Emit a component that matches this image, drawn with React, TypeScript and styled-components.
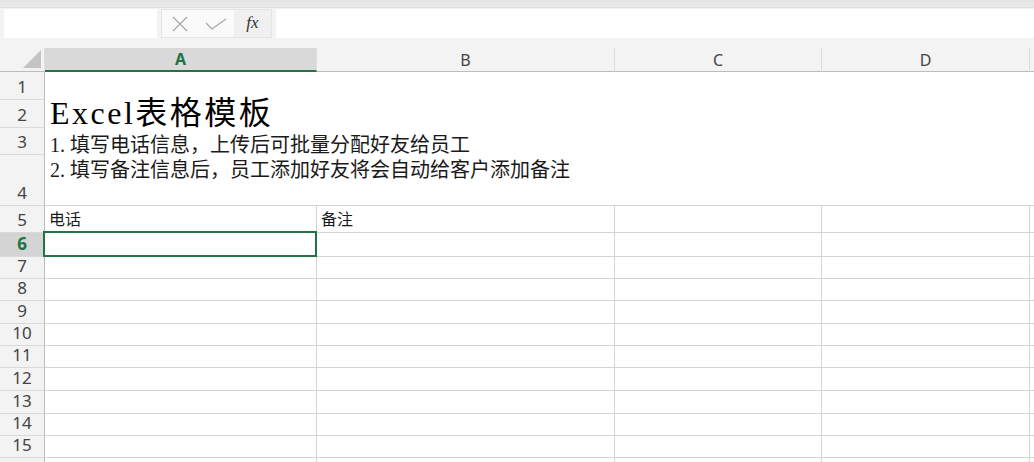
import React from "react";
import styled, { createGlobalStyle } from "styled-components";

const GlobalStyle = createGlobalStyle`
  html, body {
    margin: 0;
    padding: 0;
    background: #ffffff;
  }
  body {
    overflow: hidden;
    font-family: "Noto Sans", "Noto Sans CJK SC", sans-serif;
  }
`;

const Window = styled.div`
  width: 1034px;
  height: 462px;
  overflow: hidden;
  display: flex;
  flex-direction: column;
  background: #f3f3f3;
`;

const TopShade = styled.div`
  flex-shrink: 0;
  height: 8px;
  box-sizing: border-box;
  background: linear-gradient(#e4e4e4, #ebebeb);
  border-bottom: 1px solid #dedede;
`;

const FormulaBar = styled.div`
  flex-shrink: 0;
  display: flex;
  gap: 4px;
  padding: 1px 0 10px 4px;
  height: 29px;
`;

const NameBox = styled.div`
  width: 153px;
  background: #ffffff;
`;

const EditGroup = styled.div`
  width: 111px;
  box-sizing: border-box;
  display: flex;
  background: #fafafa;
  border: 1px solid #e4e4e4;
`;

const IconSlot = styled.div`
  width: 36px;
  display: flex;
  align-items: center;
  justify-content: center;
`;

const FxSlot = styled.div`
  flex: 1;
  display: flex;
  align-items: center;
  justify-content: center;
  background: #f0f0f0;
  font-family: "Liberation Serif", serif;
  font-style: italic;
  font-size: 17px;
  color: #333333;
  padding-bottom: 2px;
`;

const FormulaInput = styled.div`
  flex: 1;
  background: #ffffff;
`;

const rowHeights = [28, 28, 27, 51, 27, 24, 22, 22, 23, 22, 22, 23, 23, 22, 22, 22];

const Sheet = styled.div`
  flex-shrink: 0;
  display: grid;
  grid-template-columns: 45px 272px 298px 207px 208px 1fr;
  grid-template-rows: 24px ${rowHeights.map((h) => `${h}px`).join(" ")};
  background: #ffffff;
`;

const Corner = styled.div`
  box-sizing: border-box;
  display: flex;
  align-items: flex-end;
  justify-content: flex-end;
  padding: 0 3px 3px 0;
  background: #f3f3f3;
  border-right: 1px solid #dcdcdc;
  border-bottom: 1px solid #bcbcbc;
`;

const CornerTriangle = styled.div`
  width: 0;
  height: 0;
  border-left: 18px solid transparent;
  border-bottom: 18px solid #c4c4c4;
`;

const ColHeader = styled.div<{ $selected?: boolean }>`
  box-sizing: border-box;
  display: flex;
  align-items: center;
  justify-content: center;
  font-size: 16px;
  font-weight: ${(p) => (p.$selected ? 700 : 400)};
  color: ${(p) => (p.$selected ? "#217346" : "#444444")};
  background: ${(p) => (p.$selected ? "#d9d9d9" : "#f3f3f3")};
  border-right: 1px solid #dcdcdc;
  border-bottom: ${(p) => (p.$selected ? "2px solid #217346" : "1px solid #bcbcbc")};
`;

const RowHeader = styled.div<{ $selected?: boolean }>`
  box-sizing: border-box;
  display: flex;
  align-items: flex-end;
  justify-content: center;
  padding-bottom: 2px;
  line-height: 20px;
  font-size: 17px;
  font-weight: ${(p) => (p.$selected ? 700 : 400)};
  color: ${(p) => (p.$selected ? "#217346" : "#444444")};
  background: ${(p) => (p.$selected ? "#d4d4d4" : "#f3f3f3")};
  border-right: 1px solid #bcbcbc;
  border-bottom: 1px solid #d9d9d9;
`;

const MergedBlock = styled.div`
  grid-column: 2 / -1;
  grid-row: 2 / 6;
  box-sizing: border-box;
  display: flex;
  flex-direction: column;
  justify-content: center;
  padding: 0 0 0 5px;
  border-bottom: 1px solid #d4d4d4;
  font-family: "Liberation Serif", "Noto Sans CJK SC", serif;
  color: #000000;
`;

const Title = styled.div`
  font-size: 32px;
  line-height: 36px;
  letter-spacing: 2.5px;
  margin-bottom: 2px;
`;

const Note = styled.div`
  font-size: 20px;
  line-height: 25px;
  color: #1a1a1a;
`;

// the "1." prefix sits in a full-width slot, like the original font's half-width digits
const NotePrefix = styled.span`
  display: inline-block;
  width: 20px;
`;

const Cell = styled.div<{ $selected?: boolean }>`
  box-sizing: border-box;
  position: relative;
  display: flex;
  align-items: flex-end;
  padding: 0 4px 2px 4px;
  font-family: "Liberation Serif", "Noto Sans CJK SC", serif;
  font-size: 16px;
  line-height: 20px;
  color: #1a1a1a;
  border-right: 1px solid #d4d4d4;
  border-bottom: 1px solid #d4d4d4;

  ${(p) =>
    p.$selected &&
    `
    &::after {
      content: "";
      position: absolute;
      top: -2px;
      left: -2px;
      right: -1px;
      bottom: -1px;
      border: 2px solid #217346;
      pointer-events: none;
    }
  `}
`;

const columns = ["A", "B", "C", "D", ""];

const cellText: Record<string, string> = {
  "5A": "电话",
  "5B": "备注",
};

const CancelIcon = () => (
  <svg width="16" height="16" viewBox="0 0 16 16">
    <path d="M1 1 L15 15 M15 1 L1 15" stroke="#a6a6a6" strokeWidth="1.2" fill="none" />
  </svg>
);

const ConfirmIcon = () => (
  <svg width="22" height="12" viewBox="0 0 22 12">
    <path d="M1 5 L7 11 L21 1" stroke="#a6a6a6" strokeWidth="1.2" fill="none" />
  </svg>
);

export default function App() {
  const rows = Array.from({ length: 16 }, (_, i) => i + 1);

  return (
    <>
      <GlobalStyle />
      <Window>
        <TopShade />
        <FormulaBar>
          <NameBox />
          <EditGroup>
            <IconSlot>
              <CancelIcon />
            </IconSlot>
            <IconSlot>
              <ConfirmIcon />
            </IconSlot>
            <FxSlot>fx</FxSlot>
          </EditGroup>
          <FormulaInput />
        </FormulaBar>
        <Sheet>
          <Corner>
            <CornerTriangle />
          </Corner>
          {columns.map((c, i) => (
            <ColHeader key={`h${i}`} $selected={c === "A"}>
              {c}
            </ColHeader>
          ))}

          {rows.map((r) => (
            <React.Fragment key={r}>
              {/* row 16 only peeks in at the bottom edge, its number stays hidden */}
              <RowHeader style={{ gridRow: r + 1 }} $selected={r === 6}>
                {r < 16 ? r : ""}
              </RowHeader>
              {r >= 5 &&
                columns.map((c, ci) => (
                  <Cell key={`${r}-${ci}`} $selected={r === 6 && c === "A"}>
                    {cellText[`${r}${c}`]}
                  </Cell>
                ))}
            </React.Fragment>
          ))}

          <MergedBlock>
            <Title>Excel表格模板</Title>
            <Note>
              <NotePrefix>1.</NotePrefix>填写电话信息，上传后可批量分配好友给员工
            </Note>
            <Note>
              <NotePrefix>2.</NotePrefix>填写备注信息后，员工添加好友将会自动给客户添加备注
            </Note>
          </MergedBlock>
        </Sheet>
      </Window>
    </>
  );
}
